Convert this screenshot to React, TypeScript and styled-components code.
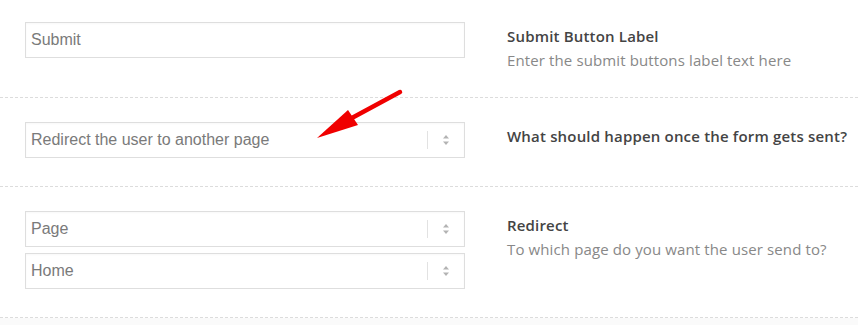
import React from 'react';
import styled, { createGlobalStyle } from 'styled-components';

const GlobalStyle = createGlobalStyle`
  html, body { margin: 0; padding: 0; background: #fff; }
  body { font-family: "Open Sans", "Liberation Sans", sans-serif; overflow: hidden; }
`;

const Page = styled.div`
  position: relative;
  width: 858px;
  height: 325px;
  background: #fafafa;
`;

const Rows = styled.div`
  background: #fff;
`;

const Row = styled.div`
  display: flex;
  align-items: flex-start;
  gap: 42px;
  padding: 24px 0 22px 25px;
  border-bottom: 1px dashed #dcdcdc;

  &:first-child {
    padding-top: 22px;
  }
`;

const Fields = styled.div`
  display: flex;
  flex-direction: column;
  width: 440px;
  flex-shrink: 0;
`;

const TextInput = styled.div`
  box-sizing: border-box;
  height: 36px;
  margin-bottom: 6px;
  padding: 0 5px;
  display: flex;
  align-items: center;
  border: 1px solid #dedede;
  box-shadow: inset 0 1px 2px rgba(0, 0, 0, 0.03);
  font-family: "Liberation Sans", Arial, sans-serif;
  font-size: 16px;
  color: #7a7a7a;
  background: #fff;
`;

const SelectBox = styled(TextInput)`
  justify-content: space-between;
  padding-right: 0;
`;

const Indicator = styled.div`
  display: flex;
  align-items: center;
  height: 100%;
`;

const Divider = styled.span`
  width: 1px;
  height: 18px;
  background: #e2e2e2;
`;

const ArrowsIcon = styled.div`
  width: 36px;
  display: flex;
  justify-content: center;
  align-items: center;
`;

const Info = styled.div`
  display: flex;
  flex-direction: column;
  padding: 2px 0 3px;
`;

const Title = styled.div`
  font-size: 15px;
  font-weight: 600;
  line-height: 24px;
  letter-spacing: 0.18px;
  color: #444;
`;

const Description = styled.div`
  font-size: 15px;
  line-height: 24px;
  letter-spacing: 0.12px;
  color: #888;
`;

const Pointer = styled.svg`
  position: absolute;
  left: 310px;
  top: 84px;
  pointer-events: none;
`;

const Select = ({ value }: { value: string }) => (
  <SelectBox>
    <span>{value}</span>
    <Indicator>
      <Divider />
      <ArrowsIcon>
        <svg width="8" height="12" viewBox="0 0 8 12">
          <path d="M4 1 L7 4.5 H1 Z" fill="#b3b3b3" />
          <path d="M4 11 L7 7.5 H1 Z" fill="#b3b3b3" />
        </svg>
      </ArrowsIcon>
    </Indicator>
  </SelectBox>
);

const App = () => (
  <>
    <GlobalStyle />
    <Page>
      <Rows>
        <Row>
          <Fields>
            <TextInput>Submit</TextInput>
          </Fields>
          <Info>
            <Title>Submit Button Label</Title>
            <Description>Enter the submit buttons label text here</Description>
          </Info>
        </Row>
        <Row>
          <Fields>
            <Select value="Redirect the user to another page" />
          </Fields>
          <Info>
            <Title>What should happen once the form gets sent?</Title>
          </Info>
        </Row>
        <Row>
          <Fields>
            <Select value="Page" />
            <Select value="Home" />
          </Fields>
          <Info>
            <Title>Redirect</Title>
            <Description>To which page do you want the user send to?</Description>
          </Info>
        </Row>
      </Rows>
      <Pointer width="100" height="60" viewBox="0 0 100 60">
        <line x1="90" y1="8" x2="40" y2="35" stroke="#f00000" strokeWidth="4.5" strokeLinecap="round" />
        <path d="M7 54 L38 26 L48 41 Z" fill="#f00000" />
      </Pointer>
    </Page>
  </>
);

export default App;
